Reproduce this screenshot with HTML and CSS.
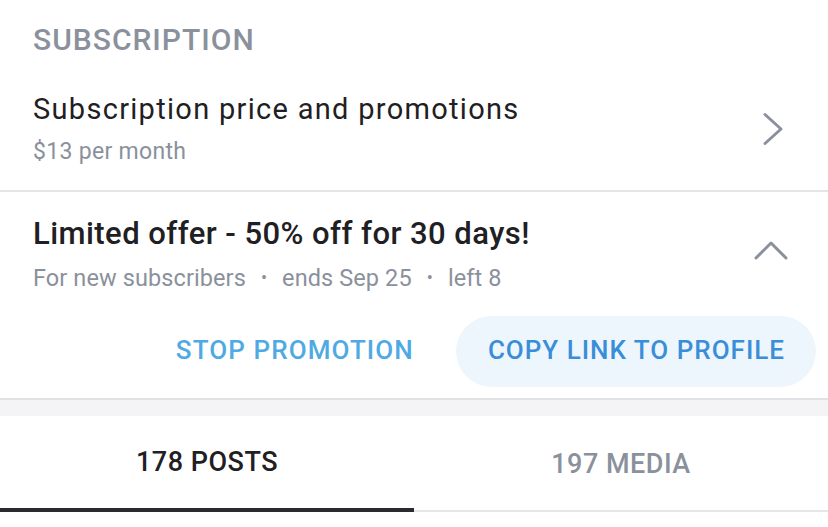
FILE: index.html
```html
<!DOCTYPE html>
<html>

<head>
    <meta charset="UTF-8">
    <meta name="viewport" content="width=device-width, initial-scale=1.0">
    <title>Subscription</title>

    <link rel="stylesheet" href="styles.css">
</head>

<body>
    <div class="section-title">SUBSCRIPTION</div>

    <div class="row">
        <div class="row-text">
            <div class="row-title">Subscription price and promotions</div>
            <div class="row-sub">$13 per month</div>
        </div>
        <svg class="chevron-right" width="24" height="34" viewBox="0 0 24 34">
            <path d="M4,2.5 L20,17 L4,31.5" />
        </svg>
    </div>

    <div class="promo">
        <div class="promo-head">
            <div class="row-text">
                <div class="promo-title">Limited offer - 50% off for 30 days!</div>
                <div class="row-sub">For new subscribers<span class="dot">•</span>ends Sep 25<span class="dot">•</span>left 8</div>
            </div>
            <svg class="chevron-up" width="34" height="20" viewBox="0 0 34 20">
                <path d="M2,17 L17,2 L32,17" />
            </svg>
        </div>

        <div class="actions">
            <div class="btn btn-text">STOP PROMOTION</div>
            <div class="btn btn-pill">COPY LINK TO PROFILE</div>
        </div>
    </div>

    <div class="gap"></div>

    <div class="tabs">
        <div class="tab tab-active">178 POSTS</div>
        <div class="tab">197 MEDIA</div>
    </div>
</body>

</html>
```

FILE: styles.css
```css
* { padding: 0px; margin: 0px; box-sizing: border-box; font-family: Roboto, "Noto Sans", sans-serif; }

body { background-color: #FFFFFF; width: 828px; overflow: hidden; }

.section-title { padding: 22px 33px 0 33px; font-size: 30px; line-height: 36px; font-weight: 500; letter-spacing: 1px; color: #8A919C; }

.row { display: flex; align-items: center; padding: 33px 43px 23px 33px; border-bottom: 2px solid #E4E4E9; }
.row-text { flex: 1; }
.row-title { font-size: 29px; line-height: 36px; letter-spacing: 1.3px; color: #1F2023; }
.row-sub { margin-top: 10px; font-size: 23px; line-height: 30px; letter-spacing: 0.3px; color: #8A919C; }
.dot { display: inline-block; padding: 0 15px; font-size: 18px; vertical-align: 2px; }

.chevron-right path, .chevron-up path { fill: none; stroke: #8A919C; stroke-width: 3; stroke-linecap: round; stroke-linejoin: round; }

.promo { border-bottom: 2px solid #E1E1E6; padding-bottom: 11px; }
.promo-head { display: flex; align-items: center; padding: 24px 40px 0 33px; }
.promo-title { font-size: 31px; line-height: 36px; font-weight: 500; letter-spacing: 0.45px; color: #1F2023; }
.promo-head .row-sub { margin-top: 11px; font-size: 23.5px; letter-spacing: 0.1px; }
.chevron-up { margin-top: -8px; }

.actions { display: flex; justify-content: flex-end; gap: 10px; padding: 23px 12px 0 0; }
.btn { height: 71px; padding: 0 32px 3px 32px; display: flex; align-items: center; border-radius: 36px; font-size: 26px; font-weight: 500; letter-spacing: 1.1px; }
.btn-text { color: #4FAAE4; }
.btn-pill { padding-right: 31px; letter-spacing: 1px; color: #3A8ED8; background-color: #EEF6FD; }

.gap { height: 16px; background-color: #F4F4F7; }

.tabs { display: flex; }
.tab { flex: 1; height: 96px; display: flex; align-items: center; justify-content: center; padding-top: 2px; border-bottom: 2px solid #E6E6EA; font-size: 27px; font-weight: 500; letter-spacing: 0.5px; color: #8A919C; }
.tab-active { padding-top: 0; border-bottom: 4px solid #2A2B2E; color: #1F2023; }
```
